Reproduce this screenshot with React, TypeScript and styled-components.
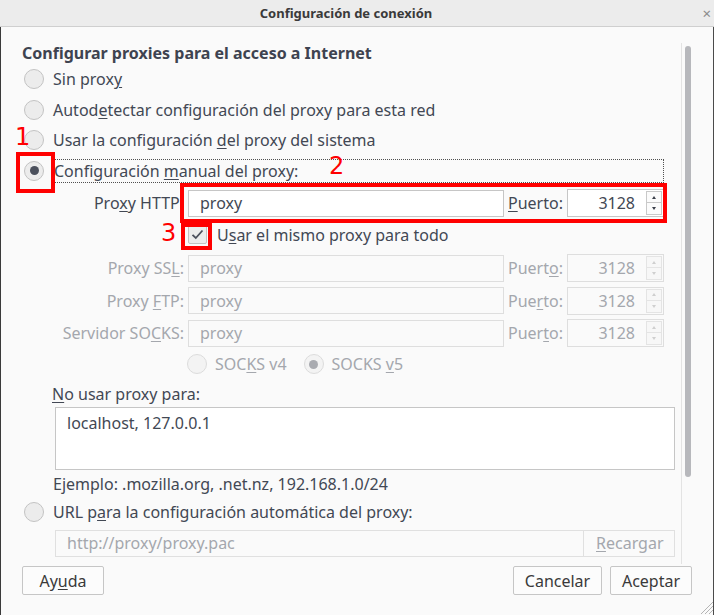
import styled, { createGlobalStyle } from "styled-components";

const GlobalStyle = createGlobalStyle`
  html, body {
    margin: 0;
    padding: 0;
    background: #fafafa;
  }
  body {
    font-family: "Noto Sans", "Open Sans", sans-serif;
    color: #424854;
  }
`;

const proxyRows = [
  { label: "Proxy SSL", keyAt: 8, portKey: 5 },
  { label: "Proxy FTP", keyAt: 6, portKey: 3 },
  { label: "Servidor SOCKS", keyAt: 11, portKey: 4 },
];

// underline one letter of a label (accesskey)
const withKey = (text: string, at: number) => (
  <span>
    {text.slice(0, at)}
    <Mn>{text[at]}</Mn>
    {text.slice(at + 1)}
  </span>
);

const App = () => {
  return (
    <Window>
      <GlobalStyle />
      <TitleBar>
        <span />
        <Title>Configuración de conexión</Title>
        <Close>×</Close>
      </TitleBar>
      <Frame>
        <Scroller>
          <Content>
            <Heading>Configurar proxies para el acceso a Internet</Heading>
            <RadioRow>
              <Radio />
              {withKey("Sin proxy", 8)}
            </RadioRow>
            <RadioRow>
              <Radio />
              {withKey("Autodetectar configuración del proxy para esta red", 5)}
            </RadioRow>
            <RadioRow>
              <Radio />
              {withKey("Usar la configuración del proxy del sistema", 22)}
            </RadioRow>
            <RadioRow>
              <Radio $checked />
              <FocusLabel>{withKey("Configuración manual del proxy:", 14)}</FocusLabel>
            </RadioRow>

            <ProxyRow $h={34}>
              <FieldLabel>{withKey("Proxy HTTP:", 3)}</FieldLabel>
              <TextInput>proxy</TextInput>
              <PortLabel>{withKey("Puerto:", 0)}</PortLabel>
              <PortBox>
                <PortValue>3128</PortValue>
                <Spinner>
                  <SpinBtn>
                    <Arrow />
                  </SpinBtn>
                  <SpinBtn>
                    <Arrow $down />
                  </SpinBtn>
                </Spinner>
              </PortBox>
            </ProxyRow>
            <CheckRow>
              <Check>
                <svg width="13" height="11" viewBox="0 0 13 11">
                  <path d="M1.5 5.8 L4.8 9 L11.5 1.5" fill="none" stroke="#4b505c" strokeWidth="1.8" />
                </svg>
              </Check>
              {withKey("Usar el mismo proxy para todo", 1)}
            </CheckRow>
            {proxyRows.map((r) => (
              <ProxyRow key={r.label} $h={32.5}>
                <FieldLabel $disabled>{withKey(r.label + ":", r.keyAt)}</FieldLabel>
                <TextInput $disabled>proxy</TextInput>
                <PortLabel $disabled>{withKey("Puerto:", r.portKey)}</PortLabel>
                <PortBox $disabled>
                  <PortValue>3128</PortValue>
                  <Spinner>
                    <SpinBtn $disabled>
                      <Arrow $disabled />
                    </SpinBtn>
                    <SpinBtn $disabled>
                      <Arrow $down $disabled />
                    </SpinBtn>
                  </Spinner>
                </PortBox>
              </ProxyRow>
            ))}
            <SocksRow>
              <SocksOption>
                <Radio $disabled />
                {withKey("SOCKS v4", 3)}
              </SocksOption>
              <SocksOption>
                <Radio $disabled $checked />
                {withKey("SOCKS v5", 6)}
              </SocksOption>
            </SocksRow>

            <NoProxyLabel>{withKey("No usar proxy para:", 0)}</NoProxyLabel>
            <TextArea>localhost, 127.0.0.1</TextArea>
            <Example>Ejemplo: .mozilla.org, .net.nz, 192.168.1.0/24</Example>

            <UrlRow>
              <Radio />
              {withKey("URL para la configuración automática del proxy:", 5)}
            </UrlRow>
            <UrlBox>
              <UrlText>http://proxy/proxy.pac</UrlText>
              <Reload>{withKey("Recargar", 0)}</Reload>
            </UrlBox>
          </Content>
          <Track>
            <Thumb />
          </Track>
        </Scroller>
        <ButtonRow>
          <Button $w={82}>{withKey("Ayuda", 2)}</Button>
          <Spacer />
          <Button $w={89}>Cancelar</Button>
          <Button $w={82}>Aceptar</Button>
        </ButtonRow>
      </Frame>

      <Grip width="16" height="16" viewBox="0 0 16 16">
        <path d="M15 3 L3 15 M15 7 L7 15 M15 11 L11 15" stroke="#b4b4b4" strokeWidth="1" />
      </Grip>

      <Mark $x={16} $y={152} $w={39} $h={41} />
      <Mark $x={180} $y={183} $w={487} $h={40} />
      <Mark $x={181} $y={223} $w={31} $h={27} />
      <Num $x={15} $y={124}>1</Num>
      <Num $x={329} $y={153}>2</Num>
      <Num $x={161} $y={220}>3</Num>
    </Window>
  );
};

export default App;

const Window = styled.div`
  position: relative;
  width: 714px;
  height: 615px;
  display: flex;
  flex-direction: column;
  background: #fafafa;
  overflow: hidden;
  font-size: 16px;
`;

const TitleBar = styled.div`
  flex: none;
  height: 26px;
  display: grid;
  grid-template-columns: 1fr auto 1fr;
  align-items: center;
  background: #ececec;
  border-bottom: 1px solid #cfcfcf;
`;

const Title = styled.div`
  margin-right: 22px;
  font-size: 13px;
  font-weight: bold;
  color: #3a3a3a;
`;

const Close = styled.div`
  justify-self: end;
  padding-right: 3px;
  font-size: 15px;
  color: #8a8a8a;
`;

const Frame = styled.div`
  flex: 1;
  display: flex;
  flex-direction: column;
  border-left: 1px solid #3a3a3a;
  border-right: 1px solid #4a4a4a;
  padding-top: 16px;
`;

const Scroller = styled.div`
  display: flex;
  height: 521px;
`;

const Content = styled.div`
  width: 681px;
  box-sizing: border-box;
  border-right: 1px solid #e3e3e3;
  overflow: hidden;
`;

const Track = styled.div`
  padding: 3px 0 0 3px;
`;

const Thumb = styled.div`
  width: 6px;
  height: 431px;
  border-radius: 3px;
  background: #b7b8bc;
`;

const Heading = styled.h1`
  margin: 0;
  height: 21px;
  padding-left: 21px;
  font-size: 16px;
  font-weight: bold;
  line-height: 21px;
  color: #3e4350;
`;

const Mn = styled.span`
  text-decoration: underline;
  text-underline-offset: 2px;
  text-decoration-thickness: 1px;
`;

const RadioRow = styled.div`
  height: 30.5px;
  display: flex;
  align-items: center;
  gap: 9px;
  padding-left: 23px;
`;

const Radio = styled.span<{ $checked?: boolean; $disabled?: boolean }>`
  flex: none;
  width: 20px;
  height: 20px;
  box-sizing: border-box;
  border-radius: 50%;
  border: 1px solid ${(p) => (p.$disabled ? "#dcdcdc" : "#c3c3c3")};
  background: ${(p) => (p.$disabled ? "#f3f3f3" : "#ececec")};
  display: flex;
  align-items: center;
  justify-content: center;
  &::after {
    content: "";
    display: ${(p) => (p.$checked ? "block" : "none")};
    width: 9px;
    height: 9px;
    border-radius: 50%;
    background: ${(p) => (p.$disabled ? "#a9abb0" : "#4b505c")};
  }
`;

const FocusLabel = styled.span`
  flex: 1;
  height: 24px;
  box-sizing: border-box;
  margin-right: 17px;
  margin-left: -1px;
  padding-left: 1px;
  border: 1px dotted #505050;
  display: flex;
  align-items: center;
`;

const ProxyRow = styled.div<{ $h: number }>`
  height: ${(p) => p.$h}px;
  display: grid;
  grid-template-columns: 138px 316px 63px 97px;
  align-items: center;
  margin-left: 49px;
`;

const FieldLabel = styled.span<{ $disabled?: boolean }>`
  text-align: right;
  padding-right: 4px;
  color: ${(p) => (p.$disabled ? "#a4a7ad" : "inherit")};
`;

const TextInput = styled.div<{ $disabled?: boolean }>`
  height: 27px;
  box-sizing: border-box;
  padding-left: 11px;
  display: flex;
  align-items: center;
  border: 1px solid ${(p) => (p.$disabled ? "#dedede" : "#c6c6c6")};
  background: ${(p) => (p.$disabled ? "#fafafa" : "#ffffff")};
  color: ${(p) => (p.$disabled ? "#a4a7ad" : "inherit")};
`;

const PortLabel = styled.span<{ $disabled?: boolean }>`
  padding-left: 4px;
  color: ${(p) => (p.$disabled ? "#a4a7ad" : "inherit")};
`;

const PortBox = styled.div<{ $disabled?: boolean }>`
  height: 28px;
  box-sizing: border-box;
  display: flex;
  align-items: center;
  border: 1px solid ${(p) => (p.$disabled ? "#dedede" : "#c6c6c6")};
  background: ${(p) => (p.$disabled ? "#fafafa" : "#ffffff")};
  color: ${(p) => (p.$disabled ? "#a4a7ad" : "inherit")};
`;

const PortValue = styled.span`
  flex: 1;
  text-align: right;
  padding-right: 11px;
`;

const Spinner = styled.div`
  width: 16px;
  margin-right: 1px;
  display: flex;
  flex-direction: column;
`;

const SpinBtn = styled.div<{ $disabled?: boolean }>`
  height: 12px;
  box-sizing: border-box;
  border: 1px solid ${(p) => (p.$disabled ? "#e4e4e4" : "#c9c9c9")};
  background: ${(p) => (p.$disabled ? "#f7f7f7" : "#fbfbfb")};
  display: flex;
  align-items: center;
  justify-content: center;
  & + & {
    border-top: none;
  }
`;

const Arrow = styled.span<{ $down?: boolean; $disabled?: boolean }>`
  width: 0;
  height: 0;
  border-left: 2.5px solid transparent;
  border-right: 2.5px solid transparent;
  ${(p) =>
    p.$down
      ? `border-top: 3px solid ${p.$disabled ? "#cfcfcf" : "#3a3f4a"};`
      : `border-bottom: 3px solid ${p.$disabled ? "#cfcfcf" : "#3a3f4a"};`}
`;

const CheckRow = styled.div`
  height: 32px;
  box-sizing: border-box;
  padding: 0 0 3px 187px;
  display: flex;
  align-items: center;
  gap: 10px;
`;

const Check = styled.span`
  width: 19px;
  height: 19px;
  box-sizing: border-box;
  border: 1px solid #c3c3c3;
  border-radius: 2px;
  background: #ececec;
  display: flex;
  align-items: center;
  justify-content: center;
`;

const SocksRow = styled.div`
  height: 29px;
  display: flex;
  align-items: center;
  gap: 17px;
  padding-left: 186px;
  color: #a4a7ad;
`;

const SocksOption = styled.div`
  display: flex;
  align-items: center;
  gap: 8px;
`;

const NoProxyLabel = styled.div`
  margin-top: 5px;
  padding-left: 51px;
  line-height: 20px;
`;

const TextArea = styled.div`
  margin: 3px 0 0 54px;
  width: 620px;
  height: 63px;
  box-sizing: border-box;
  padding: 4px 0 0 11px;
  border: 1px solid #c6c6c6;
  background: #ffffff;
`;

const Example = styled.div`
  margin-top: 4px;
  padding-left: 52px;
  line-height: 20px;
`;

const UrlRow = styled(RadioRow)`
  height: 30px;
  margin-top: 3px;
`;

const UrlBox = styled.div`
  margin: 3px 0 0 54px;
  width: 620px;
  height: 27px;
  box-sizing: border-box;
  display: flex;
  border: 1px solid #e0e0e0;
  background: #fafafa;
  color: #a4a7ad;
`;

const UrlText = styled.span`
  flex: 1;
  padding-left: 11px;
  display: flex;
  align-items: center;
`;

const Reload = styled.span`
  width: 91px;
  box-sizing: border-box;
  border-left: 1px solid #e0e0e0;
  padding-left: 12px;
  display: flex;
  align-items: center;
`;

const ButtonRow = styled.div`
  display: flex;
  gap: 8px;
  padding: 2px 21px 0 21px;
`;

const Spacer = styled.div`
  flex: 1;
`;

const Button = styled.button<{ $w: number }>`
  width: ${(p) => p.$w}px;
  height: 29px;
  box-sizing: border-box;
  border: 1px solid #c6c6c6;
  border-radius: 2px;
  background: #fcfcfc;
  font-family: inherit;
  font-size: 16px;
  color: #3a3a3a;
  padding: 0;
`;

const Grip = styled.svg`
  position: absolute;
  right: 0;
  bottom: 0;
`;

const Mark = styled.div<{ $x: number; $y: number; $w: number; $h: number }>`
  position: absolute;
  left: ${(p) => p.$x}px;
  top: ${(p) => p.$y}px;
  width: ${(p) => p.$w}px;
  height: ${(p) => p.$h}px;
  box-sizing: border-box;
  border: 4px solid #ff0000;
`;

const Num = styled.div<{ $x: number; $y: number }>`
  position: absolute;
  left: ${(p) => p.$x}px;
  top: ${(p) => p.$y}px;
  font-family: "DejaVu Sans", sans-serif;
  font-size: 24px;
  line-height: 26px;
  color: #ff0000;
`;
